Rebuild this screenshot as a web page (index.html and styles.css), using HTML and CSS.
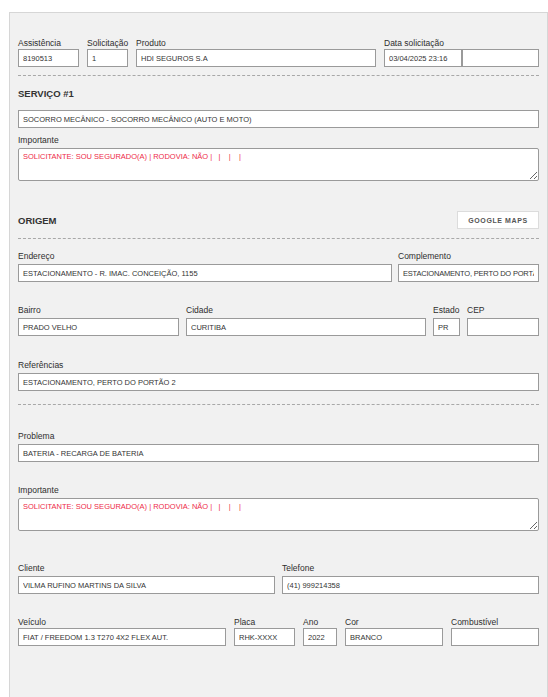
FILE: index.html
```html
<!DOCTYPE html>
<html lang="pt-BR">
<head>
<meta charset="utf-8">
<title>Solicitação</title>
<link rel="stylesheet" href="styles.css">
</head>
<body>
<div class="panel">
  <div class="row row-head">
    <div class="field"><label class="lbl tight">Assistência</label><input class="inp" value="8190513" readonly></div>
    <div class="field"><label class="lbl tight">Solicitação</label><input class="inp" value="1" readonly></div>
    <div class="field"><label class="lbl tight">Produto</label><input class="inp" value="HDI SEGUROS S.A" readonly></div>
    <div class="field"><label class="lbl tight">Data solicitação</label>
      <div class="pair"><input class="inp" value="03/04/2025 23:16" readonly><input class="inp" value="" readonly></div>
    </div>
  </div>

  <hr class="sep sep-first">

  <div class="sec-head sec-servico"><span class="sec-title">SERVIÇO #1</span></div>
  <input class="inp" value="SOCORRO MECÂNICO - SOCORRO MECÂNICO (AUTO E MOTO)" readonly>
  <div class="field gap-6"><label class="lbl">Importante</label><textarea class="ta" readonly>SOLICITANTE: SOU SEGURADO(A) | RODOVIA: NÃO |   |    |    |</textarea></div>

  <div class="sec-head sec-origem"><span class="sec-title">ORIGEM</span><button class="maps-btn" type="button">GOOGLE MAPS</button></div>
  <hr class="sep sep-origem">

  <div class="row row-end gap-11">
    <div class="field"><label class="lbl">Endereço</label><input class="inp" value="ESTACIONAMENTO - R. IMAC. CONCEIÇÃO, 1155" readonly></div>
    <div class="field"><label class="lbl">Complemento</label><input class="inp inp-tight" value="ESTACIONAMENTO, PERTO DO PORTÃO 2" readonly></div>
  </div>
  <div class="row row-bairro gap-22">
    <div class="field"><label class="lbl">Bairro</label><input class="inp" value="PRADO VELHO" readonly></div>
    <div class="field"><label class="lbl">Cidade</label><input class="inp" value="CURITIBA" readonly></div>
    <div class="field"><label class="lbl">Estado</label><input class="inp" value="PR" readonly></div>
    <div class="field"><label class="lbl">CEP</label><input class="inp" value="" readonly></div>
  </div>
  <div class="field gap-23"><label class="lbl">Referências</label><input class="inp" value="ESTACIONAMENTO, PERTO DO PORTÃO 2" readonly></div>

  <hr class="sep sep-ref">

  <div class="field gap-25"><label class="lbl">Problema</label><input class="inp" value="BATERIA - RECARGA DE BATERIA" readonly></div>
  <div class="field gap-22"><label class="lbl">Importante</label><textarea class="ta" readonly>SOLICITANTE: SOU SEGURADO(A) | RODOVIA: NÃO |   |    |    |</textarea></div>

  <div class="row row-cliente gap-31">
    <div class="field"><label class="lbl">Cliente</label><input class="inp" value="VILMA RUFINO MARTINS DA SILVA" readonly></div>
    <div class="field"><label class="lbl">Telefone</label><input class="inp" value="(41) 999214358" readonly></div>
  </div>
  <div class="row row-veiculo gap-22">
    <div class="field"><label class="lbl tight">Veículo</label><input class="inp" value="FIAT / FREEDOM 1.3 T270 4X2 FLEX AUT." readonly></div>
    <div class="field"><label class="lbl tight">Placa</label><input class="inp" value="RHK-XXXX" readonly></div>
    <div class="field"><label class="lbl tight">Ano</label><input class="inp" value="2022" readonly></div>
    <div class="field"><label class="lbl tight">Cor</label><input class="inp" value="BRANCO" readonly></div>
    <div class="field"><label class="lbl tight">Combustível</label><input class="inp" value="" readonly></div>
  </div>
</div>
</body>
</html>
```

FILE: styles.css
```css
* { box-sizing: border-box; }

html, body {
  margin: 0;
  padding: 0;
  background: #ffffff;
  font-family: "Liberation Sans", Arial, sans-serif;
  color: #333333;
}

.panel {
  margin: 12px 0 0 9px;
  width: 539px;
  border: 1px solid #d6d6d6;
  border-bottom: 0;
  background: #f1f1f1;
  padding: 24px 8px 80px 8px;
}

.row {
  display: grid;
  align-items: end;
}
.row-head { grid-template-columns: 61px 41px 240px 155px; column-gap: 8px; }
.row-end { grid-template-columns: 374px 141px; column-gap: 6px; }
.row-bairro { grid-template-columns: 161px 240px 27px 72px; column-gap: 7px; }
.row-cliente { grid-template-columns: 257px 257px; column-gap: 7px; }
.row-veiculo { grid-template-columns: 208px 61px 34px 98px 88px; column-gap: 8px; }

.field { display: block; min-width: 0; }

.lbl {
  display: block;
  font-size: 8.5px;
  line-height: 12px;
  height: 12px;
  margin-bottom: 2px;
  color: #2e2e2e;
  white-space: nowrap;
}
.lbl.tight { margin-bottom: 0; }

.inp {
  display: block;
  width: 100%;
  height: 18px;
  margin: 0;
  padding: 0 4px;
  border: 1px solid #9a9a9a;
  border-radius: 0;
  background: #ffffff;
  font-family: "Liberation Sans", Arial, sans-serif;
  font-size: 7.5px;
  color: #333333;
  outline: none;
}
.inp-tight { letter-spacing: -0.2px; }

.pair { display: flex; }
.pair .inp:first-child { width: 78px; flex: none; }
.pair .inp:last-child { flex: 1; width: auto; min-width: 0; }

.ta {
  display: block;
  width: 100%;
  height: 33px;
  margin: 0;
  padding: 3px 4px;
  border: 1px solid #9a9a9a;
  border-radius: 2px;
  background: #ffffff;
  font-family: "Liberation Sans", Arial, sans-serif;
  font-size: 7.5px;
  line-height: 10px;
  color: #ee2a48;
  outline: none;
}

.sep {
  height: 0;
  margin: 0;
  border: 0;
  border-top: 1px dashed #a8a8a8;
}
.sep-first { margin-top: 8px; }
.sep-origem { margin-top: 9px; }
.sep-ref { margin-top: 13px; }

.sec-head {
  display: flex;
  align-items: center;
  justify-content: space-between;
  height: 18px;
}
.sec-servico { margin-top: 8px; margin-bottom: 8px; }
.sec-origem { margin-top: 30px; }

.sec-title {
  font-size: 9.5px;
  font-weight: bold;
  color: #333333;
}

.maps-btn {
  width: 82px;
  height: 18px;
  margin: 0;
  padding: 0;
  border: 1px solid #dcdcdc;
  background: #ffffff;
  font-family: "Liberation Sans", Arial, sans-serif;
  font-size: 7px;
  font-weight: bold;
  letter-spacing: 0.6px;
  color: #555555;
}

.gap-6 { margin-top: 6px; }
.gap-11 { margin-top: 11px; }
.gap-22 { margin-top: 22px; }
.gap-23 { margin-top: 23px; }
.gap-25 { margin-top: 25px; }
.gap-31 { margin-top: 31px; }
```
